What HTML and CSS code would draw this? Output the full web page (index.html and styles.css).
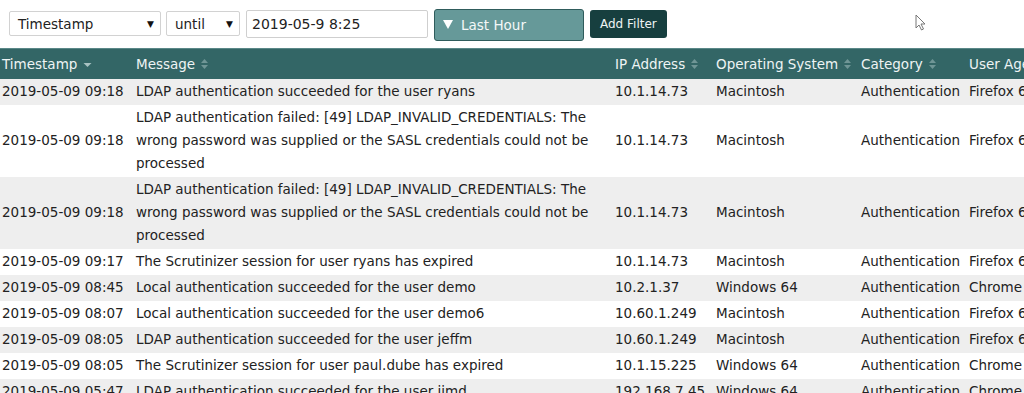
FILE: index.html
```html
<!DOCTYPE html>
<html lang="en">
<head>
    <meta charset="UTF-8">
    <title>Audit Log</title>
    <link rel="stylesheet" href="styles.css">
</head>
<body>
    <div class="toolbar">
        <div class="select select-field"><span>Timestamp</span><span class="caret">▼</span></div>
        <div class="select select-op"><span>until</span><span class="caret">▼</span></div>
        <div class="text-input">2019-05-9 8:25</div>
        <div class="range-btn">
            <svg class="range-caret" width="10" height="9" viewBox="0 0 10 9"><path d="M0 0 L10 0 L5 9 Z" fill="#fff"/></svg>
            <span>Last Hour</span>
        </div>
        <div class="add-btn">Add Filter</div>
    </div>

    <svg class="cursor" width="12" height="18" viewBox="0 0 12 18">
        <path d="M1 1 L1 14 L4 11 L6.5 16 L8.5 15 L6 10 L10 10 Z" fill="#fff" stroke="#777" stroke-width="1"/>
    </svg>

    <table class="log">
        <colgroup>
            <col class="c-time">
            <col class="c-msg">
            <col class="c-ip">
            <col class="c-os">
            <col class="c-cat">
            <col class="c-ua">
        </colgroup>
        <thead>
            <tr>
                <th>Timestamp <svg class="sort" width="9" height="10" viewBox="0 0 9 10"><path d="M0.5 3 L8.5 3 L4.5 7 Z" fill="#a9c2c2"/></svg></th>
                <th>Message <svg class="sort" width="9" height="12" viewBox="0 0 9 12"><path d="M1 5 L8 5 L4.5 1 Z M1 7 L8 7 L4.5 11 Z" fill="#6f9696"/></svg></th>
                <th>IP Address <svg class="sort" width="9" height="12" viewBox="0 0 9 12"><path d="M1 5 L8 5 L4.5 1 Z M1 7 L8 7 L4.5 11 Z" fill="#6f9696"/></svg></th>
                <th>Operating System <svg class="sort" width="9" height="12" viewBox="0 0 9 12"><path d="M1 5 L8 5 L4.5 1 Z M1 7 L8 7 L4.5 11 Z" fill="#6f9696"/></svg></th>
                <th>Category <svg class="sort" width="9" height="12" viewBox="0 0 9 12"><path d="M1 5 L8 5 L4.5 1 Z M1 7 L8 7 L4.5 11 Z" fill="#6f9696"/></svg></th>
                <th>User Agent <svg class="sort" width="9" height="12" viewBox="0 0 9 12"><path d="M1 5 L8 5 L4.5 1 Z M1 7 L8 7 L4.5 11 Z" fill="#6f9696"/></svg></th>
            </tr>
        </thead>
        <tbody>
            <tr>
                <td>2019-05-09 09:18</td>
                <td>LDAP authentication succeeded for the user ryans</td>
                <td>10.1.14.73</td>
                <td>Macintosh</td>
                <td>Authentication</td>
                <td>Firefox 66</td>
            </tr>
            <tr>
                <td>2019-05-09 09:18</td>
                <td>LDAP authentication failed: [49] LDAP_INVALID_CREDENTIALS: The wrong password was supplied or the SASL credentials could not be processed</td>
                <td>10.1.14.73</td>
                <td>Macintosh</td>
                <td>Authentication</td>
                <td>Firefox 66</td>
            </tr>
            <tr>
                <td>2019-05-09 09:18</td>
                <td>LDAP authentication failed: [49] LDAP_INVALID_CREDENTIALS: The wrong password was supplied or the SASL credentials could not be processed</td>
                <td>10.1.14.73</td>
                <td>Macintosh</td>
                <td>Authentication</td>
                <td>Firefox 66</td>
            </tr>
            <tr>
                <td>2019-05-09 09:17</td>
                <td>The Scrutinizer session for user ryans has expired</td>
                <td>10.1.14.73</td>
                <td>Macintosh</td>
                <td>Authentication</td>
                <td>Firefox 66</td>
            </tr>
            <tr>
                <td>2019-05-09 08:45</td>
                <td>Local authentication succeeded for the user demo</td>
                <td>10.2.1.37</td>
                <td>Windows 64</td>
                <td>Authentication</td>
                <td>Chrome 73</td>
            </tr>
            <tr>
                <td>2019-05-09 08:07</td>
                <td>Local authentication succeeded for the user demo6</td>
                <td>10.60.1.249</td>
                <td>Macintosh</td>
                <td>Authentication</td>
                <td>Firefox 66</td>
            </tr>
            <tr>
                <td>2019-05-09 08:05</td>
                <td>LDAP authentication succeeded for the user jeffm</td>
                <td>10.60.1.249</td>
                <td>Macintosh</td>
                <td>Authentication</td>
                <td>Firefox 66</td>
            </tr>
            <tr>
                <td>2019-05-09 08:05</td>
                <td>The Scrutinizer session for user paul.dube has expired</td>
                <td>10.1.15.225</td>
                <td>Windows 64</td>
                <td>Authentication</td>
                <td>Chrome 73</td>
            </tr>
            <tr>
                <td>2019-05-09 05:47</td>
                <td>LDAP authentication succeeded for the user jimd</td>
                <td>192.168.7.45</td>
                <td>Windows 64</td>
                <td>Authentication</td>
                <td>Chrome 73</td>
            </tr>
        </tbody>
    </table>
</body>
</html>
```

FILE: styles.css
```css
body {
    font-family: "DejaVu Sans", Verdana, sans-serif;
    font-size: 13.5px;
    color: #222;
    margin: 0;
    background: #fff;
    overflow: hidden;
    position: relative;
}
.toolbar {
    display: flex;
    align-items: flex-start;
    padding: 10px 0 0 9px;
    height: 48px;
    box-sizing: border-box;
}
.select {
    display: flex;
    justify-content: space-between;
    align-items: center;
    height: 25px;
    box-sizing: border-box;
    margin-top: 1px;
    border: 1px solid #d2d2d2;
    border-radius: 2px;
    padding: 0 6px 0 8px;
    font-size: 13.5px;
    background: #fff;
}
.select-field {
    width: 152px;
    margin-right: 5px;
}
.select-op {
    width: 74px;
    margin-right: 6px;
}
.caret {
    font-size: 9px;
    color: #111;
}
.text-input {
    width: 182px;
    height: 28px;
    box-sizing: border-box;
    border: 1px solid #cfcfcf;
    border-radius: 2px;
    padding: 0 5px;
    line-height: 26px;
    font-size: 14px;
    margin-right: 6px;
}
.range-btn {
    display: flex;
    align-items: center;
    width: 150px;
    height: 32px;
    margin-top: -1px;
    box-sizing: border-box;
    background: #669999;
    border: 1px solid #2f5c5c;
    border-radius: 3px;
    color: #f4f8f8;
    font-size: 13.5px;
    padding-left: 8px;
    margin-right: 6px;
}
.range-caret {
    margin-right: 8px;
    margin-top: -2px;
}
.add-btn {
    height: 28px;
    box-sizing: border-box;
    background: #173f3f;
    border-radius: 3px;
    color: #eef3f3;
    font-size: 12px;
    line-height: 28px;
    padding: 0 10px;
}
.cursor {
    position: absolute;
    left: 915px;
    top: 14px;
}
.log {
    border-collapse: collapse;
    table-layout: fixed;
    width: 1120px;
}
.c-time { width: 134px; }
.c-msg { width: 479px; }
.c-ip { width: 101px; }
.c-os { width: 145px; }
.c-cat { width: 108px; }
.c-ua { width: 153px; }
.log thead tr {
    background: #336666;
    border-top: 1px solid #5a8888;
}
.log th {
    color: #eef4f4;
    font-weight: normal;
    text-align: left;
    height: 30px;
    padding: 0 2px;
    white-space: nowrap;
}
.sort {
    vertical-align: -1px;
    margin-left: 1px;
}
.log td {
    padding: 1px 2px 2px 2px;
    line-height: 23px;
    vertical-align: middle;
}
.log tbody tr:nth-child(odd) {
    background: #eeeeee;
}
.log tbody tr:nth-child(even) {
    background: #fff;
}
```
